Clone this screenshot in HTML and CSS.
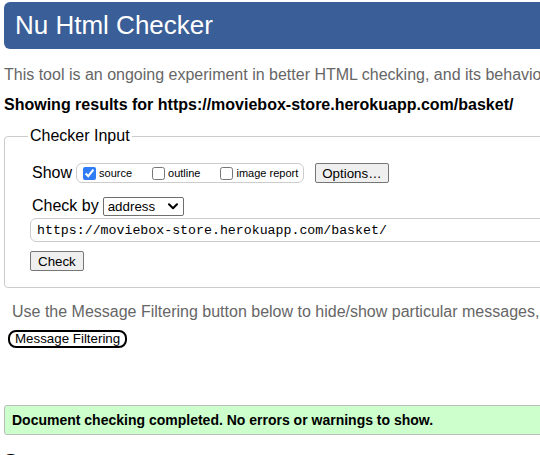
FILE: index.html
```html
<!DOCTYPE html>
<html lang="en">
<head>
<meta charset="utf-8">
<title>Showing results for https://moviebox-store.herokuapp.com/basket/ - Nu Html Checker</title>
<link rel="stylesheet" href="styles.css">
</head>
<body>
<div class="page">
  <h1 class="title">Nu Html Checker</h1>
  <p class="intro">This tool is an ongoing experiment in better HTML checking, and its behavior remains subject to change</p>
  <p class="showing">Showing results for https://moviebox-store.herokuapp.com/basket/</p>
  <form class="checker-form">
    <fieldset class="checker">
      <legend class="legend">Checker Input</legend>
      <div class="row">
        <span class="lbl">Show</span>
        <span class="opts">
          <label class="opt"><input type="checkbox" class="cb" checked>source</label>
          <label class="opt"><input type="checkbox" class="cb">outline</label>
          <label class="opt"><input type="checkbox" class="cb">image report</label>
        </span>
        <button type="button" class="btn btn-options">Options…</button>
      </div>
      <div class="row row-by">
        <span class="lbl">Check by</span>
        <span class="select">
          <select class="select-el"><option>address</option></select>
          <svg class="chev" width="10" height="7" viewBox="0 0 10 7"><path d="M1 1.2 L5 5.2 L9 1.2" fill="none" stroke="#000" stroke-width="2" stroke-linecap="round" stroke-linejoin="round"/></svg>
        </span>
      </div>
      <input class="url" type="text" value="https://moviebox-store.herokuapp.com/basket/">
      <button type="button" class="btn btn-check">Check</button>
    </fieldset>
  </form>
  <p class="filter-note">Use the Message Filtering button below to hide/show particular messages, and to see total counts of errors and warnings.</p>
  <button type="button" class="btn-filter">Message Filtering</button>
  <div class="success">Document checking completed. No errors or warnings to show.</div>
  <h2 class="source">Source</h2>
</div>
</body>
</html>
```
FILE: styles.css
```css
html {
  overflow: hidden;
}
body {
  margin: 0;
  font-family: "Liberation Sans", Arial, sans-serif;
  color: #000;
  background: #fff;
}
.page {
  width: 760px;
  padding: 2px 0 0 4px;
}
.title {
  margin: 0;
  height: 47px;
  line-height: 47px;
  font-size: 26px;
  font-weight: normal;
  color: #fff;
  background: #3a5e97;
  border-radius: 6px;
  padding-left: 11px;
  white-space: nowrap;
}
.intro {
  margin: 17px 0 0;
  font-size: 16px;
  line-height: 18px;
  color: #666;
  white-space: nowrap;
}
.showing {
  margin: 12px 0 0;
  font-size: 16px;
  line-height: 18px;
  font-weight: bold;
  white-space: nowrap;
}
.checker-form {
  margin: 13px 0 0;
}
.checker {
  margin: 0;
  border: 1px solid #ccc;
  border-radius: 4px;
  padding: 18px 0 16px 26px;
  min-width: 0;
}
.legend {
  font-size: 16px;
  line-height: 18px;
  padding: 0 2px;
  margin-left: -3px;
}
.row {
  display: flex;
  align-items: center;
  height: 20px;
}
.lbl {
  font-size: 16px;
  line-height: 18px;
  margin-left: 1px;
}
.opts {
  display: inline-flex;
  align-items: center;
  height: 18px;
  margin-left: 4px;
  padding: 0 5px 0 6px;
  border: 1px solid #ccc;
  border-radius: 6px;
  font-size: 11px;
}
.opt {
  display: inline-flex;
  align-items: center;
  margin-right: 20px;
}
.opt:last-child {
  margin-right: 0;
}
.cb {
  width: 13px;
  height: 13px;
  margin: 0 3px 0 0;
  accent-color: #2f7cf6;
}
.btn {
  font-family: "Liberation Sans", Arial, sans-serif;
  font-size: 13.33px;
  height: 20px;
  padding: 0 6px;
  background: #efefef;
  color: #000;
  border: 1px solid #767676;
  border-radius: 2px;
}
.btn-options {
  margin-left: 11px;
  height: 20px;
}
.row-by {
  margin-top: 13px;
}
.select {
  display: inline-flex;
  align-items: center;
  width: 81px;
  height: 19px;
  box-sizing: border-box;
  margin-left: 4px;
  border: 1px solid #6e6e6e;
  border-radius: 2px;
  padding: 0 5px 0 4px;
}
.select-el {
  appearance: none;
  -webkit-appearance: none;
  border: 0;
  background: transparent;
  padding: 0;
  margin: 0;
  font-family: "Liberation Sans", Arial, sans-serif;
  font-size: 13.33px;
  color: #000;
  flex: 1;
  min-width: 0;
  outline: none;
}
.chev {
  display: block;
  flex: none;
}
.url {
  display: block;
  box-sizing: border-box;
  width: 720px;
  height: 24px;
  margin: 2px 0 0 -1px;
  padding: 0 6px;
  border: 1px solid #ccc;
  border-radius: 6px;
  font-family: "Liberation Mono", "DejaVu Sans Mono", monospace;
  font-size: 13.25px;
  color: #000;
}
.btn-check {
  display: block;
  margin: 9px 0 0 -1px;
  padding: 0 7px;
}
.filter-note {
  margin: 15px 0 0 8px;
  font-size: 16px;
  line-height: 18px;
  color: #666;
  white-space: nowrap;
}
.btn-filter {
  display: block;
  margin: 9px 0 0 4px;
  height: 18px;
  padding: 0 5px;
  font-family: "Liberation Sans", Arial, sans-serif;
  font-size: 13.33px;
  line-height: 14px;
  background: #fff;
  color: #000;
  border: 2px solid #000;
  border-radius: 8px;
}
.success {
  margin: 57px 0 0;
  height: 28px;
  line-height: 28px;
  padding-left: 7px;
  background: #ccffcc;
  border: 1px solid #bbb;
  border-radius: 3px;
  font-size: 14px;
  font-weight: bold;
}
.source {
  margin: 14px 0 0;
  font-size: 20px;
  line-height: 24px;
}
```
